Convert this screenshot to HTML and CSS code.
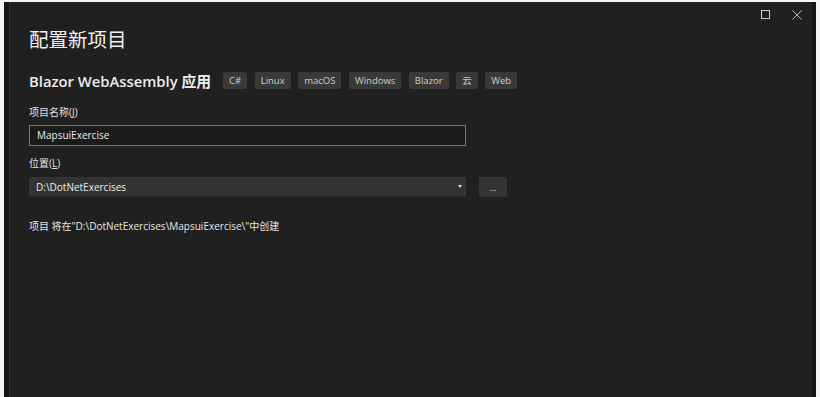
FILE: index.html
```html
<!DOCTYPE html>
<html lang="zh-CN">
<head>
<meta charset="utf-8">
<title>配置新项目</title>
<link rel="stylesheet" href="styles.css">
</head>
<body>
<div class="window">
  <div class="panel">
    <div class="controls">
      <span class="ctl"><svg width="10" height="10" viewBox="0 0 10 10"><rect x="0.5" y="0.5" width="8" height="8" fill="none" stroke="#cfcfcf" stroke-width="1"/></svg></span>
      <span class="ctl"><svg width="10" height="10" viewBox="0 0 10 10"><path d="M0.5 0.5 L9.5 9.5 M9.5 0.5 L0.5 9.5" stroke="#bdbdbd" stroke-width="1"/></svg></span>
    </div>
    <h1 class="title">配置新项目</h1>
    <div class="subrow">
      <h2 class="subtitle">Blazor WebAssembly 应用</h2>
      <div class="tags">
        <span class="tag">C#</span>
        <span class="tag">Linux</span>
        <span class="tag">macOS</span>
        <span class="tag">Windows</span>
        <span class="tag">Blazor</span>
        <span class="tag">云</span>
        <span class="tag">Web</span>
      </div>
    </div>
    <label class="label">项目名称(<u>J</u>)</label>
    <div class="input">MapsuiExercise</div>
    <label class="label loc">位置(<u>L</u>)</label>
    <div class="locrow">
      <div class="select">D:\DotNetExercises<span class="arrow"></span></div>
      <div class="btn">...</div>
    </div>
    <p class="note">项目 将在"D:\DotNetExercises\MapsuiExercise\"中创建</p>
  </div>
</div>
</body>
</html>
```

FILE: styles.css
```css
html, body {
  margin: 0;
  padding: 0;
  background: #f4f4f4;
  height: 397px;
  overflow: hidden;
}
body {
  font-family: "Open Sans", "Noto Sans CJK SC", sans-serif;
  color: #e6e6e6;
}
.window {
  margin: 2px 4px 0 4px;
  height: 395px;
  background: #151515;
  padding: 0 4px 0 5px;
  box-sizing: border-box;
}
.panel {
  position: relative;
  height: 100%;
  background: #202020;
  border-left: 1px solid #2c2c2c;
  padding: 0 0 0 19px;
  box-sizing: border-box;
}
.controls {
  position: absolute;
  top: 8px;
  right: 10px;
  display: flex;
  gap: 21px;
}
.ctl { display: block; width: 10px; height: 10px; }
.ctl svg { display: block; }
.title {
  margin: 0;
  padding-top: 23px;
  font-family: "Noto Sans CJK SC", sans-serif;
  font-weight: 400;
  font-size: 19.5px;
  line-height: 28px;
  color: #f0f0f0;
}
.subrow {
  display: flex;
  align-items: center;
  margin-top: 14px;
  height: 26px;
}
.subtitle {
  margin: 0;
  font-family: "Open Sans", "Noto Sans CJK SC", sans-serif;
  font-weight: 600;
  font-size: 14.8px;
  color: #ececec;
  white-space: nowrap;
}
.tags {
  display: flex;
  gap: 7.5px;
  margin-left: 12px;
}
.tag {
  display: block;
  height: 17px;
  line-height: 17px;
  padding: 0 6px;
  background: #393939;
  border-radius: 2px;
  font-size: 9.5px;
  color: #cfcfcf;
}
.label {
  display: block;
  margin-top: 12px;
  font-size: 10px;
  line-height: 14px;
  color: #e4e4e4;
}
.label u { text-decoration: underline; text-underline-offset: 1px; }
.label.loc { margin-top: 10px; }
.input {
  margin-top: 6px;
  width: 437px;
  height: 21px;
  box-sizing: border-box;
  border: 1px solid #777777;
  background: #1b1b1b;
  padding-left: 7px;
  font-size: 10px;
  line-height: 19px;
  color: #ececec;
}
.locrow {
  display: flex;
  gap: 13px;
  margin-top: 7px;
}
.select {
  position: relative;
  width: 437px;
  height: 20px;
  box-sizing: border-box;
  background: #333333;
  border-bottom: 1px solid #2a2a2a;
  padding-left: 7px;
  font-size: 10px;
  line-height: 20px;
  color: #ececec;
}
.arrow {
  position: absolute;
  right: 4px;
  top: 8px;
  width: 0;
  height: 0;
  border-left: 2px solid transparent;
  border-right: 2px solid transparent;
  border-top: 3px solid #dcdcdc;
}
.btn {
  width: 28px;
  height: 20px;
  background: #333333;
  font-size: 9px;
  line-height: 22px;
  text-align: center;
  color: #dddddd;
}
.note {
  margin: 22px 0 0 0;
  font-size: 10px;
  line-height: 14px;
  color: #e6e6e6;
}
```
